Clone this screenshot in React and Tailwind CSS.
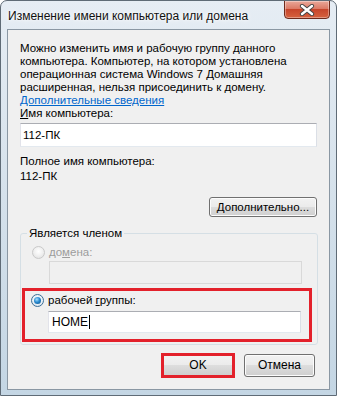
import React from "react";

function Radio({ checked, disabled }) {
  if (checked) {
    return (
      <span className="w-[13px] h-[13px] rounded-full border border-[#3d6f96] bg-[radial-gradient(circle_at_50%_40%,#ffffff_0%,#e6eef4_60%,#c9d6e0_100%)] flex items-center justify-center shrink-0">
        <span className="w-[7px] h-[7px] rounded-full bg-[radial-gradient(circle_at_40%_35%,#a8e0ff_0%,#2a8bd0_45%,#0b4f86_100%)]" />
      </span>
    );
  }
  return (
    <span
      className={
        "w-[13px] h-[13px] rounded-full border shrink-0 " +
        (disabled
          ? "border-[#c9c9c9] bg-[radial-gradient(circle_at_50%_40%,#ffffff_0%,#f0f0f0_50%,#dcdcdc_100%)]"
          : "border-[#8a8a8a] bg-white")
      }
    />
  );
}

function Btn({ children, className = "" }) {
  return (
    <div
      className={
        "flex items-center justify-center rounded-[3px] border border-[#707070] bg-[linear-gradient(#f2f2f2_0%,#ebebeb_49%,#dddddd_50%,#cfcfcf_100%)] shadow-[inset_0_0_0_1px_#fcfcfc] " +
        className
      }
    >
      {children}
    </div>
  );
}

export default function App() {
  return (
    <div className="w-[337px] h-[396px] flex flex-col rounded-t-[7px] border border-[#5f6b76] bg-linear-to-b from-[#e6edf4] via-[#d5e1eb] to-[#c4d6e4] font-['Liberation_Sans',Arial,sans-serif] text-[11.5px] leading-[13px] text-black overflow-hidden">
      {/* title bar */}
      <div className="h-[28px] flex items-start justify-between pl-[7px] pr-[6px] shrink-0">
        <span className="mt-[8px] text-[12px] leading-[14px] text-[#111] [text-shadow:0_0_6px_#ffffff,0_0_3px_#ffffff]">
          Изменение имени компьютера или домена
        </span>
        <div className="w-[46px] h-[19px] -mt-px rounded-b-[4px] border border-[#6e2a1c] bg-[linear-gradient(#e9a89a_0%,#dc7a66_45%,#c7452b_50%,#d6623f_100%)] shadow-[inset_0_0_0_1px_rgba(255,255,255,0.35)] flex items-center justify-center">
          <svg width="16" height="12" viewBox="0 0 16 12">
            <path
              d="M3 2 L13 10 M13 2 L3 10"
              stroke="#444"
              strokeWidth="4.2"
              strokeLinecap="round"
            />
            <path
              d="M3 2 L13 10 M13 2 L3 10"
              stroke="#ffffff"
              strokeWidth="2.4"
              strokeLinecap="round"
            />
          </svg>
        </div>
      </div>

      {/* client panel */}
      <div className="flex-1 mx-[6px] mb-[5px] border border-[#8a97a3] bg-[#f0f0f0] pl-[12px] pr-[12px] pt-[12px] flex flex-col">
        <p>
          Можно изменить имя и рабочую группу данного компьютера. Компьютер, на котором установлена операционная система Windows 7 Домашняя расширенная, нельзя присоединить к домену.
        </p>
        <span className="text-[#0066cc] underline">Дополнительные сведения</span>
        <span>
          <span className="underline">И</span>мя компьютера:
        </span>
        <div className="mt-[3px] h-[24px] border border-[#abadb3] border-l-[#e2e3ea] border-r-[#dbdfe6] border-b-[#e3e9ef] bg-white flex items-center pl-[2px]">
          112-ПК
        </div>

        <span className="mt-[8px]">Полное имя компьютера:</span>
        <span className="mt-[2px]">112-ПК</span>

        <Btn className="mt-[14px] self-end w-[108px] h-[20px]">
          <span>
            <span className="underline">Д</span>ополнительно...
          </span>
        </Btn>

        <fieldset className="mt-[10px] w-[298px] border border-[#d5dfe5] rounded-[3px] pb-[2px]">
          <legend className="ml-[6px] px-[2px]">Является членом</legend>
          <div className="mt-[6px] flex items-center pl-[11px] gap-[4px] text-[#9c9c9c]">
            <Radio disabled />
            <span>
              до<span className="underline">м</span>ена:
            </span>
          </div>
          <div className="mt-[2px] ml-[28px] w-[253px] h-[23px] border border-[#d9d9d9] bg-[#f0f0f0]" />

          <div className="mt-[4px] ml-[1px] w-[290px] border-[3px] border-[#e3212b] pb-[6px]">
            <div className="mt-[3px] flex items-center pl-[6px] gap-[4px]">
              <Radio checked />
              <span>
                рабочей <span className="underline">г</span>руппы:
              </span>
            </div>
            <div className="mt-[4px] ml-[23px] w-[253px] h-[22px] border border-[#abadb3] border-l-[#e2e3ea] border-r-[#dbdfe6] border-b-[#e3e9ef] bg-white flex items-center pl-[3px] text-[12px]">
              HOME
              <span className="ml-[1px] w-px h-[14px] bg-black" />
            </div>
          </div>
        </fieldset>

        <div className="mt-[8px] flex items-center justify-end gap-[9px] pr-[2px]">
          <div className="w-[74px] h-[25px] border-[3px] border-[#e3212b] bg-[linear-gradient(#f2f2f2_0%,#ebebeb_49%,#dddddd_50%,#cfcfcf_100%)] flex items-center justify-center text-[12px]">
            OK
          </div>
          <Btn className="w-[71px] h-[23px] text-[12px]">Отмена</Btn>
        </div>
      </div>
    </div>
  );
}
